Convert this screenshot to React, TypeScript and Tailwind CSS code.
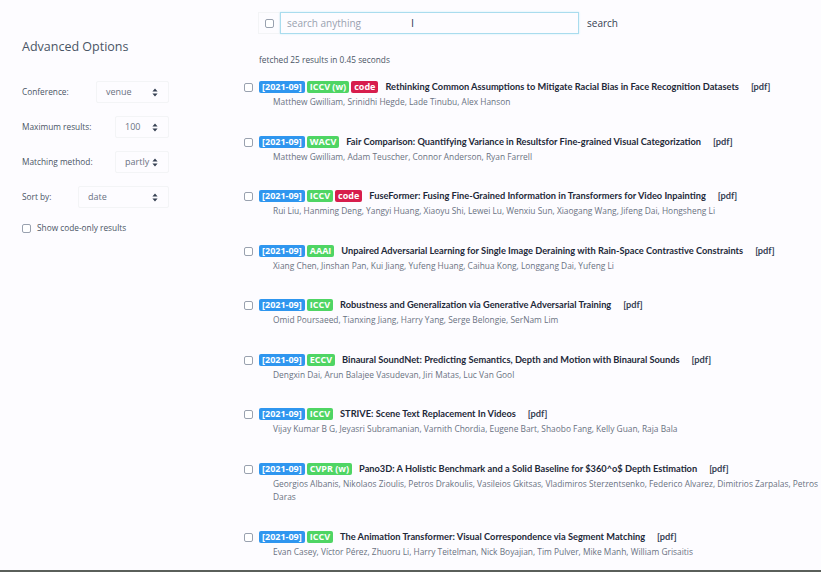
import React from 'react';

type Paper = {
  venue: string;
  code?: boolean;
  title: string;
  authors: string;
};

const papers: Paper[] = [
  {
    venue: 'ICCV (w)',
    code: true,
    title: 'Rethinking Common Assumptions to Mitigate Racial Bias in Face Recognition Datasets',
    authors: 'Matthew Gwilliam, Srinidhi Hegde, Lade Tinubu, Alex Hanson',
  },
  {
    venue: 'WACV',
    title: 'Fair Comparison: Quantifying Variance in Resultsfor Fine-grained Visual Categorization',
    authors: 'Matthew Gwilliam, Adam Teuscher, Connor Anderson, Ryan Farrell',
  },
  {
    venue: 'ICCV',
    code: true,
    title: 'FuseFormer: Fusing Fine-Grained Information in Transformers for Video Inpainting',
    authors:
      'Rui Liu, Hanming Deng, Yangyi Huang, Xiaoyu Shi, Lewei Lu, Wenxiu Sun, Xiaogang Wang, Jifeng Dai, Hongsheng Li',
  },
  {
    venue: 'AAAI',
    title: 'Unpaired Adversarial Learning for Single Image Deraining with Rain-Space Contrastive Constraints',
    authors: 'Xiang Chen, Jinshan Pan, Kui Jiang, Yufeng Huang, Caihua Kong, Longgang Dai, Yufeng Li',
  },
  {
    venue: 'ICCV',
    title: 'Robustness and Generalization via Generative Adversarial Training',
    authors: 'Omid Poursaeed, Tianxing Jiang, Harry Yang, Serge Belongie, SerNam Lim',
  },
  {
    venue: 'ECCV',
    title: 'Binaural SoundNet: Predicting Semantics, Depth and Motion with Binaural Sounds',
    authors: 'Dengxin Dai, Arun Balajee Vasudevan, Jiri Matas, Luc Van Gool',
  },
  {
    venue: 'ICCV',
    title: 'STRIVE: Scene Text Replacement In Videos',
    authors: 'Vijay Kumar B G, Jeyasri Subramanian, Varnith Chordia, Eugene Bart, Shaobo Fang, Kelly Guan, Raja Bala',
  },
  {
    venue: 'CVPR (w)',
    title: 'Pano3D: A Holistic Benchmark and a Solid Baseline for $360^o$ Depth Estimation',
    authors:
      'Georgios Albanis, Nikolaos Zioulis, Petros Drakoulis, Vasileios Gkitsas, Vladimiros Sterzentsenko, Federico Alvarez, Dimitrios Zarpalas, Petros Daras',
  },
  {
    venue: 'ICCV',
    title: 'The Animation Transformer: Visual Correspondence via Segment Matching',
    authors: 'Evan Casey, Víctor Pérez, Zhuoru Li, Harry Teitelman, Nick Boyajian, Tim Pulver, Mike Manh, William Grisaitis',
  },
];

function Box() {
  return <span className="block w-[9px] h-[9px] border border-gray-400 rounded-[2px] bg-white shrink-0" />;
}

function Carets() {
  return (
    <svg width="6" height="9" viewBox="0 0 6 9" className="text-gray-700">
      <path d="M3 0.5 L5.6 3.6 H0.4 Z M3 8.5 L5.6 5.4 H0.4 Z" fill="currentColor" />
    </svg>
  );
}

function Select({ value, width }: { value: string; width: string }) {
  return (
    <div className={`${width} h-[22px] border border-gray-100 rounded-[2px] flex items-center justify-between pl-[9px] pr-[10px] text-[9px] text-gray-500`}>
      <span>{value}</span>
      <Carets />
    </div>
  );
}

function Option({ label, value, width }: { label: string; value: string; width: string }) {
  return (
    <div className="flex items-center justify-between h-[22px] w-[147px]">
      <span className="text-[8.3px] text-gray-600">{label}</span>
      <Select value={value} width={width} />
    </div>
  );
}

function Badge({ text, color }: { text: string; color: string }) {
  return (
    <span className={`${color} text-white font-bold text-[9px] leading-[12px] px-[3px] rounded-[2px] whitespace-nowrap`}>
      {text}
    </span>
  );
}

export default function App() {
  return (
    <div
      className="w-[821px] h-[572px] bg-[#fdfcff] border-b-2 border-[#5a5f5a] flex overflow-hidden"
      style={{ fontFamily: '"Open Sans", "Liberation Sans", sans-serif' }}
    >
      <aside className="w-[244px] shrink-0 pl-[22px] pt-[38px]">
        <h2 className="text-[12.5px] leading-[18px] text-gray-600 mb-[25px]">Advanced Options</h2>
        <div className="flex flex-col gap-[13px]">
          <Option label="Conference:" value="venue" width="w-[73px]" />
          <Option label="Maximum results:" value="100" width="w-[54px]" />
          <Option label="Matching method:" value="partly" width="w-[54px]" />
          <Option label="Sort by:" value="date" width="w-[91px]" />
        </div>
        <label className="flex items-center gap-[6px] mt-[14px] text-[8.3px] text-gray-600">
          <Box />
          Show code-only results
        </label>
      </aside>

      <main className="flex-1 pt-[12px] pr-[3px]">
        <div className="flex items-center ml-[14px]">
          <div className="w-[22px] h-[22px] border border-gray-100 flex items-center justify-center">
            <Box />
          </div>
          <div className="relative w-[299px] h-[22px] border border-[#a9dcee] shadow-[0_0_2px_#cdeef7] flex items-center px-[6px] text-[10px] text-gray-400">
            search anything
            <span className="absolute left-[130px] top-[4px] text-[11px] leading-[12px] text-gray-700">I</span>
          </div>
          <span className="ml-[8px] text-[10px] text-gray-700">search</span>
        </div>

        <p className="mt-[19px] ml-[15px] text-[8.3px] text-gray-600 leading-[14px]">fetched 25 results in 0.45 seconds</p>

        <div className="mt-[14px] flex flex-col gap-[27px]">
          {papers.map((p, i) => (
            <div key={i} className="flex items-start gap-[6px]">
              <span className="mt-[2px]">
                <Box />
              </span>
              <div className="flex-1">
                <div className="flex items-center gap-[2px] h-[12px]">
                  <Badge text="[2021-09]" color="bg-[#2f96ef]" />
                  <Badge text={p.venue} color="bg-[#4fd564]" />
                  {p.code && <Badge text="code" color="bg-[#d71d4c]" />}
                  <span
                    className="ml-[5px] text-[9.25px] font-bold text-gray-800 whitespace-nowrap"
                    style={{ fontFamily: 'Lato, "Open Sans", sans-serif' }}
                  >
                    {p.title}
                  </span>
                  <span
                    className="ml-[10px] text-[9.25px] font-bold text-gray-700"
                    style={{ fontFamily: 'Lato, "Open Sans", sans-serif' }}
                  >
                    [pdf]
                  </span>
                </div>
                <p className="mt-[2px] ml-[14px] text-[8.4px] leading-[13.5px] text-gray-500">{p.authors}</p>
              </div>
            </div>
          ))}
        </div>
      </main>
    </div>
  );
}
